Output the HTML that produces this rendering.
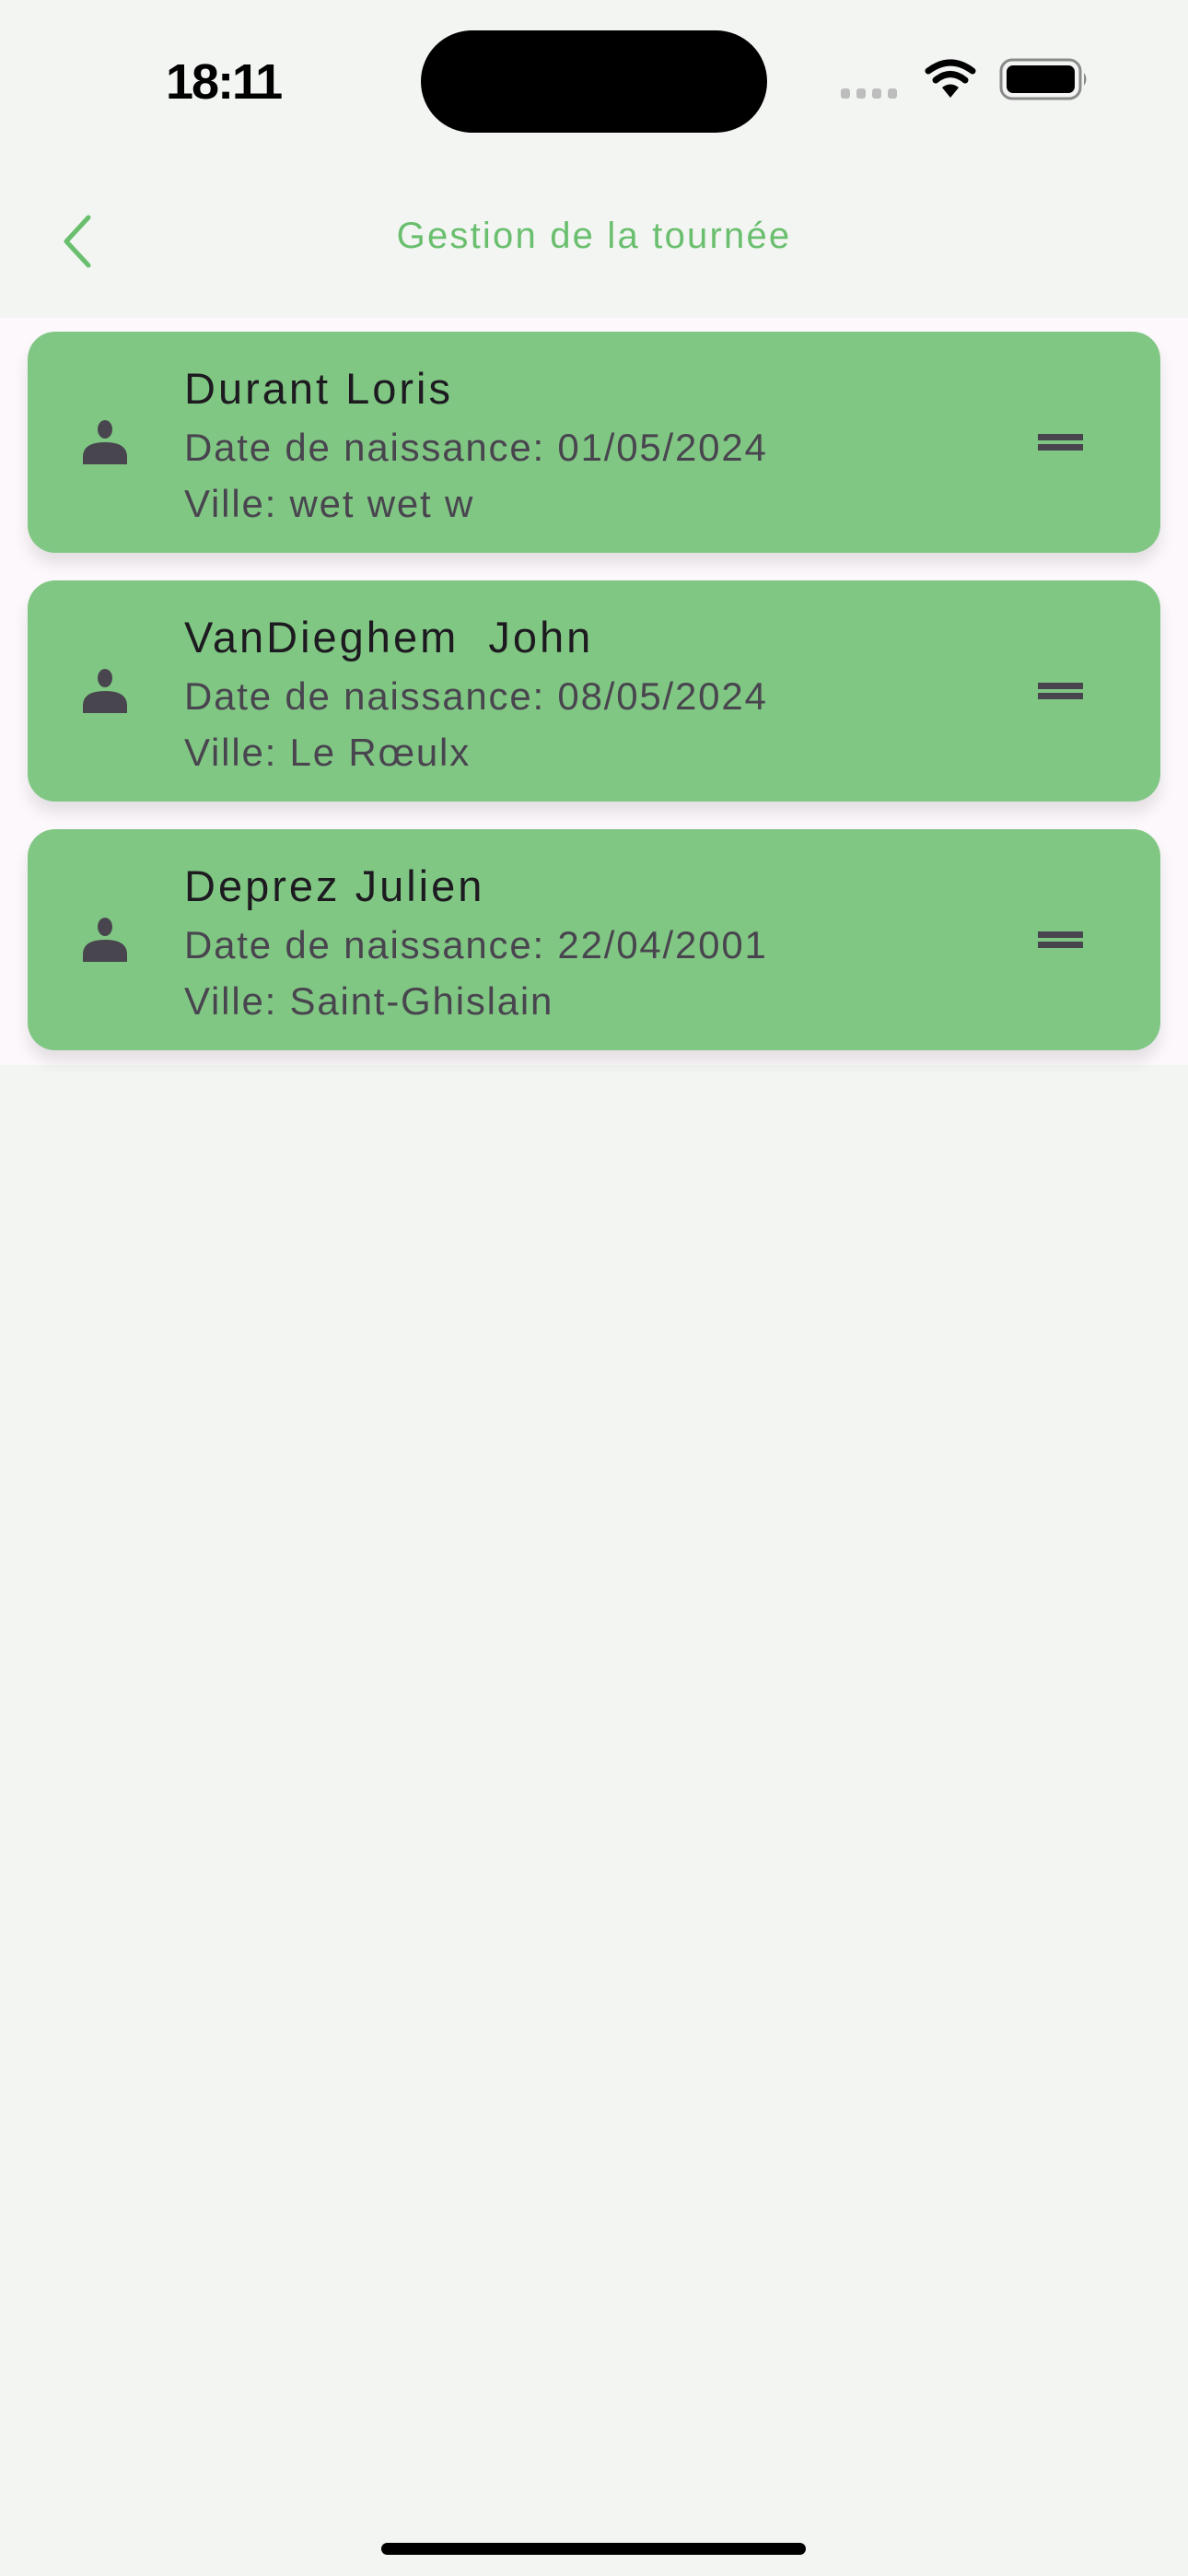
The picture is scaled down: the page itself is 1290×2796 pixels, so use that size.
<!DOCTYPE html>
<html><head><meta charset="utf-8"><style>
*{margin:0;padding:0;box-sizing:border-box}
body{width:1290px;height:2796px;background:#f3f5f3;font-family:"Liberation Sans",sans-serif;position:relative;overflow:hidden}
.abs{position:absolute}
.time{left:180px;top:58px;font-size:54px;font-weight:bold;color:#000;letter-spacing:-2px}
.pill{left:457px;top:33px;width:376px;height:111px;background:#000;border-radius:56px}
.title{left:0;width:1290px;top:234px;text-align:center;font-size:40px;color:#6abf6e;letter-spacing:2.2px}
.list{left:0;top:345px;width:1290px;height:811px;background:#fcf8fc}
.card{position:absolute;left:30px;width:1230px;height:240px;background:#81c784;border-radius:30px;box-shadow:0 12px 16px rgba(0,0,0,0.1)}
.name{position:absolute;left:170px;top:34px;font-size:47px;color:#1d1b20;letter-spacing:3px}
.l2{position:absolute;left:170px;top:102px;font-size:42px;color:#49454f;letter-spacing:1.8px}
.l3{position:absolute;left:170px;top:163px;font-size:42px;color:#49454f;letter-spacing:1.8px}
.person{position:absolute;left:60px;top:96px}
.handle{position:absolute;left:1097px;top:111px;width:49px;height:18px;border-top:7px solid #49454f;border-bottom:7px solid #49454f}
.home{left:414px;top:2760px;width:461px;height:13px;background:#000;border-radius:7px}
</style></head><body>
<div class="abs time">18:11</div>
<div class="abs pill"></div>
<svg class="abs" style="left:910px;top:60px" width="270" height="52" viewBox="0 0 270 52">
<g fill="#bdbdbd"><rect x="3" y="36" width="10" height="11" rx="3"/><rect x="20" y="36" width="10" height="11" rx="3"/><rect x="37" y="36" width="10" height="11" rx="3"/><rect x="54" y="36" width="10" height="11" rx="3"/></g>
<g fill="none" stroke="#000" stroke-width="7" stroke-linecap="round"><path d="M98 17 Q122 -1 146 17"/><path d="M106 27 Q122 14 138 27"/></g>
<path d="M113 35 Q122 28 131 35 L122 46Z" fill="#000"/>
<rect x="177" y="5" width="86" height="42" rx="12" fill="none" stroke="#8a8a8a" stroke-width="3"/>
<rect x="183" y="11" width="74" height="30" rx="7" fill="#000"/>
<path d="M267 19 Q272 26 267 33Z" fill="#8a8a8a"/>
</svg>
<svg class="abs" style="left:64px;top:232px" width="42" height="60" viewBox="0 0 42 60"><path d="M32 4 L8 30 L32 56" fill="none" stroke="#6abf6e" stroke-width="5" stroke-linecap="round" stroke-linejoin="round"/></svg>
<div class="abs title">Gestion de la tournée</div>
<div class="abs list">
<div class="card" style="top:15px">
<svg class="person" width="48" height="48" viewBox="0 0 48 48"><ellipse cx="24" cy="10" rx="8" ry="10" fill="#49454f"/><path d="M0 48 L0 40 Q0 24 24 24 Q48 24 48 40 L48 48Z" fill="#49454f"/></svg>
<div class="name">Durant Loris</div><div class="l2">Date de naissance: 01/05/2024</div><div class="l3">Ville: wet wet w</div><div class="handle"></div></div>
<div class="card" style="top:285px">
<svg class="person" width="48" height="48" viewBox="0 0 48 48"><ellipse cx="24" cy="10" rx="8" ry="10" fill="#49454f"/><path d="M0 48 L0 40 Q0 24 24 24 Q48 24 48 40 L48 48Z" fill="#49454f"/></svg>
<div class="name">VanDieghem&nbsp; John</div><div class="l2">Date de naissance: 08/05/2024</div><div class="l3">Ville: Le Rœulx</div><div class="handle"></div></div>
<div class="card" style="top:555px">
<svg class="person" width="48" height="48" viewBox="0 0 48 48"><ellipse cx="24" cy="10" rx="8" ry="10" fill="#49454f"/><path d="M0 48 L0 40 Q0 24 24 24 Q48 24 48 40 L48 48Z" fill="#49454f"/></svg>
<div class="name">Deprez Julien</div><div class="l2">Date de naissance: 22/04/2001</div><div class="l3">Ville: Saint-Ghislain</div><div class="handle"></div></div>
</div>
<div class="abs home"></div>
</body></html>
